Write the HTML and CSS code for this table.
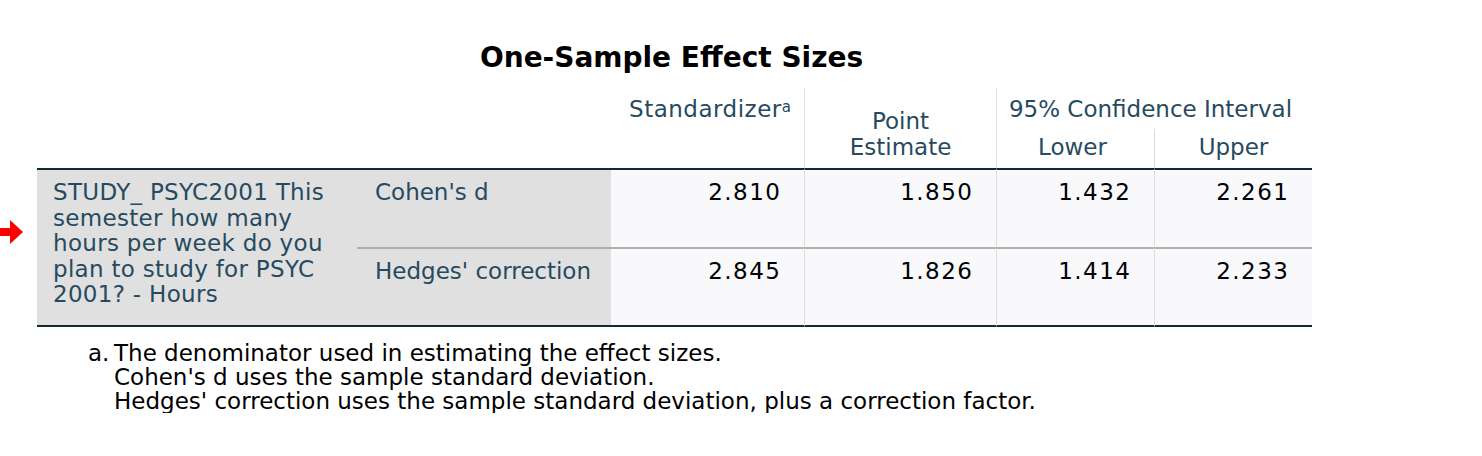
FILE: index.html
```html
<!DOCTYPE html>
<html>
<head>
	<title>One-Sample Effect Sizes</title>
	<link rel="stylesheet" href="styles.css">
</head>
<body>
	<div class="marker">
		<svg width="24" height="26" viewBox="0 0 24 26">
			<rect x="0" y="9" width="11" height="8" fill="#ff0000"/>
			<polygon points="10,1 23,13 10,25" fill="#ff0000"/>
		</svg>
	</div>
	<div class="output">
		<div class="title">One-Sample Effect Sizes</div>
		<table class="effect">
			<colgroup>
				<col style="width: 320px">
				<col style="width: 254px">
				<col style="width: 193px">
				<col style="width: 192px">
				<col style="width: 158px">
				<col style="width: 158px">
			</colgroup>
			<thead>
				<tr class="head-top">
					<th colspan="2" rowspan="2" class="corner"></th>
					<th rowspan="2" class="col-std">Standardizer<sup>a</sup></th>
					<th rowspan="2" class="col-point">Point<br>Estimate</th>
					<th colspan="2" class="col-ci">95% Confidence Interval</th>
				</tr>
				<tr class="head-sub">
					<th class="sub">Lower</th>
					<th class="sub">Upper</th>
				</tr>
			</thead>
			<tbody>
				<tr class="row-first">
					<th rowspan="2" class="var">STUDY_ PSYC2001 This<br>semester how many<br>hours per week do you<br>plan to study for PSYC<br>2001? - Hours</th>
					<th class="stat">Cohen's d</th>
					<td>2.810</td>
					<td>1.850</td>
					<td>1.432</td>
					<td>2.261</td>
				</tr>
				<tr class="row-second">
					<th class="stat">Hedges' correction</th>
					<td>2.845</td>
					<td>1.826</td>
					<td>1.414</td>
					<td>2.233</td>
				</tr>
			</tbody>
		</table>
		<div class="footnote">
			<span class="note-mark">a.</span>
			<div class="note-text">
				The denominator used in estimating the effect sizes.<br>
				Cohen's d uses the sample standard deviation.<br>
				Hedges' correction uses the sample standard deviation, plus a correction factor.
			</div>
		</div>
	</div>
</body>
</html>
```

FILE: styles.css
```css
body {
	margin: 0;
	background: #fff;
	font-family: "DejaVu Sans", sans-serif;
	font-size: 23px;
	color: #010205;
}

.marker {
	position: absolute;
	left: 0;
	top: 219px;
	line-height: 0;
}

.output {
	width: 1275px;
	padding: 41px 0 0 37px;
}

.title {
	text-align: center;
	font-weight: bold;
	font-size: 28px;
	line-height: 33px;
	color: #000;
	margin-bottom: 14px;
	padding-right: 6px;
}

.effect {
	table-layout: fixed;
	width: 1275px;
	border-collapse: separate;
	border-spacing: 0;
	line-height: 25.5px;
}

.effect th,
.effect td {
	padding: 0;
	box-sizing: border-box;
	vertical-align: top;
	font-weight: normal;
}

.effect thead th {
	color: #264a60;
}

.head-top th {
	height: 41px;
}

.head-sub th {
	height: 39px;
}

.col-std {
	text-align: right;
	padding: 9px 13px 0 0 !important;
	letter-spacing: 0.5px;
}

.col-std sup {
	font-size: 15px;
	line-height: 0;
	vertical-align: 5px;
	margin-left: 0;
	letter-spacing: 0;
}

.col-point {
	text-align: center;
	padding-top: 21px !important;
	border-left: 1px solid #dedede;
}

.col-ci {
	text-align: center;
	padding: 9px 8px 0 0 !important;
	border-left: 1px solid #dedede;
}

.sub {
	text-align: center;
	padding-top: 6px !important;
	border-left: 1px solid #dedede;
}

.head-sub .sub:first-child {
	padding-right: 6px !important;
}

.effect tbody th {
	color: #264a60;
	text-align: left;
	background: #e0e0e0;
	padding-top: 10px;
}

.var {
	padding-left: 16px !important;
	border-bottom: 2px solid #152935;
	letter-spacing: 0.3px;
}

.stat {
	padding-left: 18px !important;
}

.effect tbody td {
	text-align: right;
	background: #f9f9fb;
	padding: 10px 22.5px 0 0;
	letter-spacing: 1.5px;
}

.effect tbody td + td {
	border-left: 1px solid #dedede;
}

.row-first > * {
	border-top: 2px solid #152935;
	height: 79px;
}

.row-second > * {
	border-top: 2px solid #b0b0b0;
	border-bottom: 2px solid #152935;
	height: 80px;
}

.footnote {
	display: flex;
	margin: 14px 0 0 51px;
	line-height: 24px;
	color: #000;
}

.note-mark {
	width: 26px;
	flex-shrink: 0;
}
```
